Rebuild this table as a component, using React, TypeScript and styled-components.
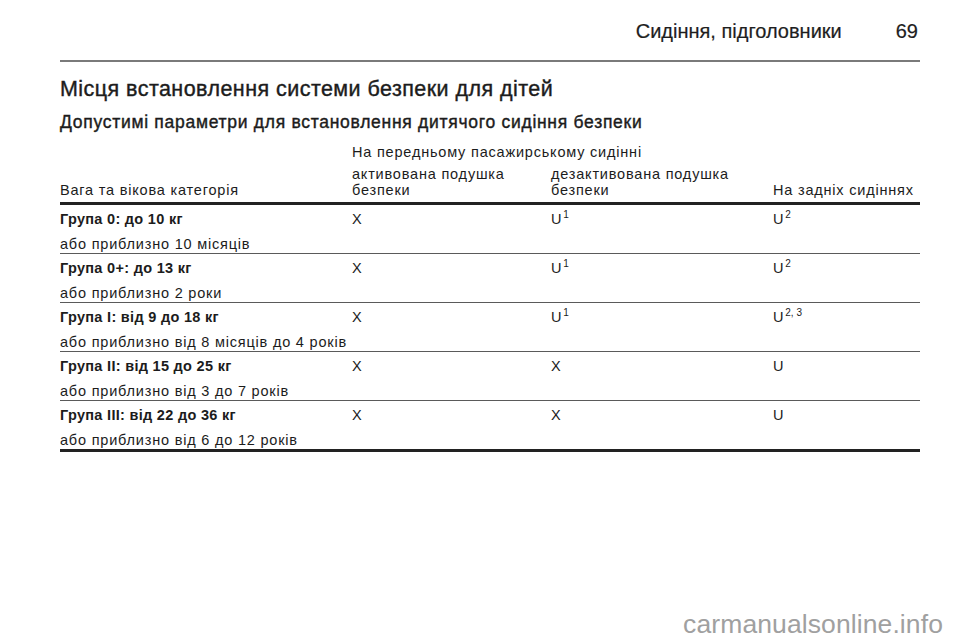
import React from 'react';
import styled, { createGlobalStyle } from 'styled-components';

const GlobalStyle = createGlobalStyle`
  html, body {
    margin: 0;
    padding: 0;
    background: #fff;
  }
  body {
    font-family: "Liberation Sans", Arial, sans-serif;
    color: #1c1c1c;
  }
`;

const Page = styled.div`
  width: 960px;
  height: 642px;
  box-sizing: border-box;
  padding: 0 40px 0 60px;
  position: relative;
  overflow: hidden;
`;

const RunningHead = styled.header`
  display: flex;
  justify-content: flex-end;
  align-items: baseline;
  gap: 54px;
  height: 62px;
  box-sizing: border-box;
  padding-top: 20px;
  border-bottom: 2px solid #7a7a7a;
  font-size: 20px;
  color: #1e1e1e;
  -webkit-text-stroke: 0.2px #1e1e1e;
`;

const PageNumber = styled.span`
  padding-right: 2px;
`;

const Title = styled.h1`
  margin: 14px 0 0;
  font-size: 21.5px;
  font-weight: normal;
  letter-spacing: 0.45px;
  line-height: 26px;
  -webkit-text-stroke: 0.4px #1c1c1c;
`;

const Subtitle = styled.h2`
  margin: 9px 0 0;
  font-size: 17.5px;
  font-weight: normal;
  letter-spacing: 0.72px;
  line-height: 22px;
  -webkit-text-stroke: 0.4px #1c1c1c;
`;

const Table = styled.div`
  margin-top: 9px;
  display: grid;
  grid-template-columns: 292px 199px 222px 1fr;
  font-size: 14.5px;
  letter-spacing: 0.8px;
  line-height: 17px;
`;

const GroupHead = styled.div`
  grid-column: 2 / 4;
  padding: 2px 0 5px;
`;

const HeadCell = styled.div`
  display: flex;
  align-items: flex-end;
  padding-bottom: 4px;
  line-height: 16px;
  border-bottom: 3px solid #222;
`;

const Cell = styled.div<{ $last?: boolean }>`
  padding: 6px 0 0;
  border-bottom: ${({ $last }) => ($last ? '3px solid #222' : '1px solid #5a5a5a')};
`;

const Group = styled.div`
  font-weight: bold;
  letter-spacing: 0.3px;
  margin-bottom: 8px;
`;

const Note = styled.div``;

const Mark = styled.div`
  height: 42px;
`;

const Sup = styled.sup`
  font-size: 10px;
  letter-spacing: 0;
  vertical-align: 0;
  position: relative;
  top: -6px;
  margin-left: 1px;
`;

const Watermark = styled.div`
  position: absolute;
  right: 17px;
  bottom: 2px;
  font-size: 26.5px;
  color: #a0a0a0;
  letter-spacing: 0.1px;
`;

type MarkData = { v: string; sup?: string };

type Row = { group: string; note: string; marks: MarkData[] };

const rows: Row[] = [
  {
    group: 'Група 0: до 10 кг',
    note: 'або приблизно 10 місяців',
    marks: [{ v: 'X' }, { v: 'U', sup: '1' }, { v: 'U', sup: '2' }],
  },
  {
    group: 'Група 0+: до 13 кг',
    note: 'або приблизно 2 роки',
    marks: [{ v: 'X' }, { v: 'U', sup: '1' }, { v: 'U', sup: '2' }],
  },
  {
    group: 'Група I: від 9 до 18 кг',
    note: 'або приблизно від 8 місяців до 4 років',
    marks: [{ v: 'X' }, { v: 'U', sup: '1' }, { v: 'U', sup: '2, 3' }],
  },
  {
    group: 'Група II: від 15 до 25 кг',
    note: 'або приблизно від 3 до 7 років',
    marks: [{ v: 'X' }, { v: 'X' }, { v: 'U' }],
  },
  {
    group: 'Група III: від 22 до 36 кг',
    note: 'або приблизно від 6 до 12 років',
    marks: [{ v: 'X' }, { v: 'X' }, { v: 'U' }],
  },
];

export default function App() {
  return (
    <>
      <GlobalStyle />
      <Page>
        <RunningHead>
          <span>Сидіння, підголовники</span>
          <PageNumber>69</PageNumber>
        </RunningHead>
        <Title>Місця встановлення системи безпеки для дітей</Title>
        <Subtitle>Допустимі параметри для встановлення дитячого сидіння безпеки</Subtitle>
        <Table>
          <div />
          <GroupHead>На передньому пасажирському сидінні</GroupHead>
          <div />
          <HeadCell>Вага та вікова категорія</HeadCell>
          <HeadCell>
            активована подушка
            <br />
            безпеки
          </HeadCell>
          <HeadCell>
            дезактивована подушка
            <br />
            безпеки
          </HeadCell>
          <HeadCell>На задніх сидіннях</HeadCell>
          {rows.map((row, i) => {
            const last = i === rows.length - 1;
            return (
              <React.Fragment key={row.group}>
                <Cell $last={last}>
                  <Group>{row.group}</Group>
                  <Note>{row.note}</Note>
                </Cell>
                {row.marks.map((m, j) => (
                  <Cell key={j} $last={last}>
                    <Mark>
                      {m.v}
                      {m.sup && <Sup>{m.sup}</Sup>}
                    </Mark>
                  </Cell>
                ))}
              </React.Fragment>
            );
          })}
        </Table>
        <Watermark>carmanualsonline.info</Watermark>
      </Page>
    </>
  );
}
